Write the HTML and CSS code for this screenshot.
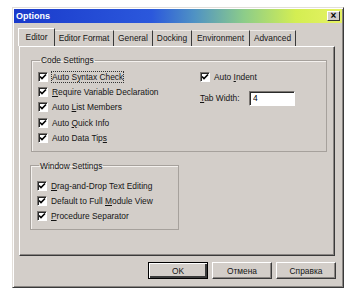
FILE: index.html
```html
<!DOCTYPE html>
<html>
<head>
    <title>Options</title>
    <link rel="stylesheet" href="styles.css">
</head>
<body>
    <div class="window">
        <div class="titlebar">
            <span class="title">Options</span>
            <span class="close">&#215;</span>
        </div>

        <div class="tabs">
            <div class="tab active">Editor</div>
            <div class="tab">Editor Format</div>
            <div class="tab">General</div>
            <div class="tab">Docking</div>
            <div class="tab">Environment</div>
            <div class="tab">Advanced</div>
        </div>

        <div class="panel">
            <fieldset class="group code">
                <legend>Code Settings</legend>
                <div class="cols">
                    <div class="col-left">
                        <div class="row"><span class="check"></span><span class="focus">Auto Syntax Check</span></div>
                        <div class="row"><span class="check"></span><span><u>R</u>equire Variable Declaration</span></div>
                        <div class="row"><span class="check"></span><span>Auto <u>L</u>ist Members</span></div>
                        <div class="row"><span class="check"></span><span>Auto <u>Q</u>uick Info</span></div>
                        <div class="row"><span class="check"></span><span>Auto Data Tip<u>s</u></span></div>
                    </div>
                    <div class="col-right">
                        <div class="row"><span class="check"></span><span>Auto <u>I</u>ndent</span></div>
                        <div class="row field">
                            <label for="tabWidth"><u>T</u>ab Width:</label>
                            <input type="text" id="tabWidth" value="4">
                        </div>
                    </div>
                </div>
            </fieldset>

            <fieldset class="group winset">
                <legend>Window Settings</legend>
                <div class="row"><span class="check"></span><span><u>D</u>rag-and-Drop Text Editing</span></div>
                <div class="row"><span class="check"></span><span>Default to Full <u>M</u>odule View</span></div>
                <div class="row"><span class="check"></span><span><u>P</u>rocedure Separator</span></div>
            </fieldset>
        </div>

        <div class="buttons">
            <button class="default">OK</button>
            <button>Отмена</button>
            <button>Справка</button>
        </div>
    </div>
</body>
</html>
```

FILE: styles.css
```css
/* page */
body {
    margin: 0;
    background: #fff;
    font-family: 'Liberation Sans', Arial, sans-serif;
    font-size: 8.4px;
    color: #151515;
}

/* dialog window */
.window {
    margin: 7px 0 0 12px;
    width: 332px;
    height: 281px;
    box-sizing: border-box;
    padding: 1px;
    background: #d3cec9;
    border: 1px solid;
    border-color: #e2ded9 #3a3a3a #3a3a3a #e2ded9;
    box-shadow: inset 1px 1px 0 #fff, inset -1px -1px 0 #8a8683;
}

.titlebar {
    height: 14px;
    display: flex;
    align-items: center;
    justify-content: space-between;
    padding: 0 2px 0 2px;
    background: linear-gradient(to right, #1a3acb 0%, #2b58dc 42%, #4f92c4 55%, #8ccc8a 70%, #d4ee52 86%, #e6f264 100%);
}
.title {
    color: #fff;
    font-weight: bold;
    font-size: 9px;
}
.close {
    width: 13px;
    height: 10px;
    box-sizing: border-box;
    background: #d3cec9;
    border: 1px solid;
    border-color: #fff #303030 #303030 #fff;
    font-weight: bold;
    font-size: 10px;
    line-height: 7px;
    text-align: center;
    color: #000;
}

/* tabs */
.tabs {
    display: flex;
    align-items: flex-end;
    height: 18px;
    margin: 5px 0 0 4px;
}
.tab {
    height: 16px;
    line-height: 15px;
    box-sizing: border-box;
    text-align: center;
    border-top: 1px solid #eeeae6;
    border-right: 1px solid #3a3a3a;
}
.tab:nth-child(1) { width: 37px; }
.tab:nth-child(2) { width: 59px; }
.tab:nth-child(3) { width: 39px; }
.tab:nth-child(4) { width: 39px; }
.tab:nth-child(5) { width: 58px; }
.tab:nth-child(6) { width: 46px; }
.tab.active {
    height: 18px;
    line-height: 17px;
    border-left: 1px solid #fff;
    border-top: 1px solid #fff;
}

/* tab page */
.panel {
    margin-left: 5px;
    width: 316px;
    height: 210px;
    box-sizing: border-box;
    padding-top: 8px;
    border: 1px solid;
    border-color: #fff #3a3a3a #3a3a3a #fff;
    box-shadow: inset -1px -1px 0 #8a8683;
}

.group {
    margin: 0 0 0 11px;
    padding: 0 6px;
    border: 1px solid #a6a19c;
    box-shadow: inset 1px 1px 0 #f4f1ee;
}
.group legend {
    padding: 0 1px;
    margin-left: 2px;
    line-height: 10px;
}
.code {
    width: 296px;
    box-sizing: border-box;
    padding-top: 4px;
    padding-bottom: 5px;
}
.winset {
    width: 149px;
    box-sizing: border-box;
    margin-top: 9px;
    margin-left: 10px;
    padding-top: 8px;
    padding-bottom: 5px;
}
.winset .row { height: 15px; }

.cols {
    display: flex;
}
.col-left {
    width: 162px;
}

.row {
    display: flex;
    align-items: center;
    height: 15.4px;
    white-space: nowrap;
}
.check {
    width: 10px;
    height: 10px;
    box-sizing: border-box;
    margin-right: 4px;
    background: #fff url("data:image/svg+xml;utf8,<svg xmlns='http://www.w3.org/2000/svg' width='8' height='8' viewBox='0 0 8 8'><path d='M1 3.5 L3 5.5 L7 1.5' stroke='black' stroke-width='1.6' fill='none'/></svg>") center no-repeat;
    border: 1px solid;
    border-color: #7a7672 #fff #fff #7a7672;
    box-shadow: inset 1px 1px 0 #2a2a2a;
}
.focus {
    outline: 1px dotted #333;
    outline-offset: 0;
}

.field {
    margin-top: 6px;
}
.field label {
    width: 49px;
}
.field input {
    width: 46px;
    height: 15px;
    box-sizing: border-box;
    padding: 0 3px;
    font: inherit;
    background: #fff;
    border: 1px solid;
    border-color: #7a7672 #fff #fff #7a7672;
    box-shadow: inset 1px 1px 0 #2a2a2a;
}

/* dialog buttons */
.buttons {
    display: flex;
    justify-content: flex-end;
    gap: 4px;
    margin-top: 6px;
    padding-right: 6px;
}
button {
    width: 60px;
    height: 17px;
    padding: 0;
    font: inherit;
    color: #151515;
    background: #d3cec9;
    border: 1px solid;
    border-color: #fff #3a3a3a #3a3a3a #fff;
    box-shadow: inset -1px -1px 0 #8a8683;
}
button.default {
    border: 1px solid #000;
    box-shadow: inset 1px 1px 0 #fff, inset -2px -2px 0 #3a3a3a;
}
```
